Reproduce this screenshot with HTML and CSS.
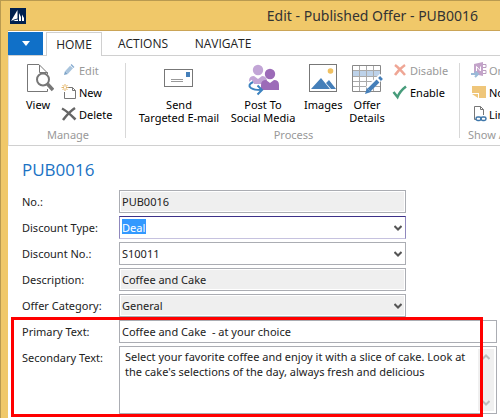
FILE: index.html
```html
<!DOCTYPE html>
<html lang="en">
<head>
<meta charset="utf-8">
<title>Edit - Published Offer - PUB0016</title>
<link rel="stylesheet" href="styles.css">
</head>
<body>
<div class="window">
  <header class="titlebar">
    <svg class="logo" viewBox="0 0 16 16" aria-hidden="true"><rect width="16" height="16" fill="#00204f"/><path d="M1 13 7.500 2V10.500Q4 11 1 13ZM9 13V5L11 9V13ZM12 13V6.500L14 10V13ZM3 13Q5 11.500 8 11.500V13Z" fill="#fff"/></svg>
    <span class="window-title">Edit - Published Offer - PUB0016</span>
  </header>
  <div class="client">
    <nav class="tabs">
      <button class="app-menu" type="button" aria-label="Application menu"><svg class="menu-arrow" viewBox="0 0 8 5"><path d="M0 0h8L4 5Z" fill="#fff"/></svg></button>
      <button class="tab active" type="button">HOME</button>
      <button class="tab" type="button">ACTIONS</button>
      <button class="tab wide" type="button">NAVIGATE</button>
    </nav>
    <section class="ribbon">
      <div class="group manage">
        <div class="commands">
          <button class="big view" type="button">
            <svg class="icon" viewBox="0 0 32 32"><path d="M17 .5H5.500V27.500H25.500V25M17 .5 25.500 9M17.500 1V8.500H25.500V10" fill="none" stroke="#777"/><circle cx="21" cy="15.500" r="6" fill="#fff" stroke="#777" stroke-width="2"/><path d="m25.500 20 5.500 6" stroke="#777" stroke-width="3.500"/></svg>
            View
          </button>
          <div class="stack">
            <button class="small disabled" type="button" disabled><svg class="icon" viewBox="0 0 16 16"><path d="m3 13 1-4 3 3Z" fill="#7da4c8"/><path d="m5.500 10.500 5-5.500" stroke="#a9c4dd" stroke-width="4"/><path d="m11 4.500 1-1" stroke="#86abd0" stroke-width="4"/></svg>Edit</button>
            <button class="small" type="button"><svg class="icon" viewBox="0 0 16 16"><path d="M7 3.500h4.500l3 3v8h-11V8M11.500 3.500v3h3" fill="none" stroke="#777"/><path d="M4 0v7M.5 3.500h7M1.500 1l5 5M6.500 1l-5 5" stroke="#e5b566"/><rect x="3" y="2.500" width="2" height="2" fill="#fff"/></svg>New</button>
            <button class="small" type="button"><svg class="icon" viewBox="0 0 16 16"><path d="M1 2.500Q6 5 14.500 13.500M14 2Q8 6 2 14" fill="none" stroke="#666" stroke-width="2.500"/></svg>Delete</button>
          </div>
        </div>
        <div class="group-label">Manage</div>
      </div>
      <div class="group process">
        <div class="commands">
          <button class="big send" type="button">
            <svg class="icon" viewBox="0 0 32 32"><rect x="1.500" y="5.500" width="28" height="17" fill="#fff" stroke="#777"/><rect x="23" y="8" width="4" height="5" fill="#457fba"/><path d="M8 15.500h12M8 17.500h12" stroke="#999"/></svg>
            Send<br>Targeted E-mail
          </button>
          <button class="big post" type="button">
            <svg class="icon" viewBox="0 0 32 32"><circle cx="11" cy="6" r="5.200" fill="#c2a5d6"/><path d="M2 20v-3q0-5 5-5l4 3 4-3q4 0 5 4v4Z" fill="#c2a5d6"/><circle cx="23" cy="10" r="5.200" fill="#9c6bb8"/><path d="M14 26v-5q0-5 5-5l4 3 4-3q5 0 5 5v5Z" fill="#9c6bb8"/><path d="M6 18q-5 3-2 6 2 3 10 2" fill="none" stroke="#fff" stroke-width="5"/><path d="M6 18q-6 3-2 6 3 2 10 2M10.500 21.500l4.500 4.500-4.500 4.500" fill="none" stroke="#3c82bf" stroke-width="2"/></svg>
            Post To<br>Social Media
          </button>
          <button class="big images" type="button">
            <svg class="icon" viewBox="0 0 32 32"><rect x="2.500" y=".5" width="27" height="27" fill="#fff" stroke="#777"/><circle cx="23.500" cy="7" r="2.800" fill="#f0c060"/><path d="m4 25 10-11 9 11ZM19 19l3-3 7 9h-5Z" fill="#457fb9"/></svg>
            Images
          </button>
          <button class="big offer" type="button">
            <svg class="icon" viewBox="0 0 32 32"><path d="M1.500 1.500h28v26h-28Z" fill="#fff"/><path d="M2 7h27v5H2Z" fill="#bdd2e9"/><path d="M1.500 6.500h28M1.500 12.500h28M1.500 17.500h28M1.500 22.500h28M8.500 1.500v26M15.500 1.500v26M22.500 1.500v26" stroke="#aaa" fill="none"/><path d="M1.500 1.500h28v26h-28Z" stroke="#888" fill="none"/><path d="m17 25 14-13" stroke="#fff" stroke-width="6"/><path d="m14 30 2-6 4 4Z" fill="#457fb9"/><path d="m18 26 9-9M28.500 15.500l2-2" stroke="#457fb9" stroke-width="4"/></svg>
            Offer<br>Details
          </button>
          <div class="stack">
            <button class="small disabled" type="button" disabled><svg class="icon" viewBox="0 0 16 16"><path d="M3 3q4 3 10 10M13 3Q7 7 3 13" fill="none" stroke="#efa695" stroke-width="2.500"/></svg>Disable</button>
            <button class="small" type="button"><svg class="icon" viewBox="0 0 16 16"><path d="m1.500 8 4 5Q8 7 14 2.500" fill="none" stroke="#479c7b" stroke-width="2.500"/></svg>Enable</button>
          </div>
        </div>
        <div class="group-label">Process</div>
      </div>
      <div class="group attached">
        <div class="commands">
          <div class="stack">
            <button class="small disabled" type="button" disabled><svg class="icon" viewBox="0 0 16 16"><path d="M3 2 12 0v14l-9-2Z" fill="#c3a3c9"/><path d="M5.500 9V4.500l4 4.500V4.500" stroke="#fff" fill="none"/><path d="M12 2.500h3v3h-3M12 8.500h3v3h-3" stroke="#b99dc0" fill="none"/><path d="M0 12h6M4 9.500 7 12l-3 3" stroke="#9bbad8" stroke-width="2" fill="none"/></svg>OneNote</button>
            <button class="small" type="button"><svg class="icon" viewBox="0 0 16 16"><path d="M1 2h14v12H8V9H1ZM1 10h6v4Z" fill="#efc67a"/></svg>Notes</button>
            <button class="small" type="button"><svg class="icon" viewBox="0 0 16 16"><path d="M5 13.500H3.500V.5h6l3 3V9M9.500.5v3h3" fill="none" stroke="#777"/><g fill="none" stroke="#3f77aa" stroke-width="1.500"><rect x="5" y="11" width="5" height="3.500" rx="1.700"/><rect x="10" y="11" width="5" height="3.500" rx="1.700"/></g></svg>Links</button>
          </div>
        </div>
        <div class="group-label">Show Attached</div>
      </div>
    </section>
    <main class="page">
      <h1>PUB0016</h1>
      <form class="form">
        <div class="row"><label for="no">No.:</label><input id="no" class="field readonly" value="PUB0016" readonly></div>
        <div class="row"><label for="type">Discount Type:</label><div class="combo"><select id="type" class="field focused"><option>Deal</option></select><svg class="chevron" viewBox="0 0 8 6"><path d="m.5 1 3.500 3.500L7.500 1" /></svg></div></div>
        <div class="row"><label for="dno">Discount No.:</label><div class="combo"><select id="dno" class="field"><option>S10011</option></select><svg class="chevron" viewBox="0 0 8 6"><path d="m.5 1 3.500 3.500L7.500 1" /></svg></div></div>
        <div class="row"><label for="desc">Description:</label><input id="desc" class="field readonly" value="Coffee and Cake" readonly></div>
        <div class="row"><label for="cat">Offer Category:</label><div class="combo"><select id="cat" class="field readonly"><option>General</option></select><svg class="chevron" viewBox="0 0 8 6"><path d="m.5 1 3.500 3.500L7.500 1" /></svg></div></div>
        <div class="highlight">
          <div class="row long"><label for="primary">Primary Text:</label><input id="primary" class="field" value="Coffee and Cake  - at your choice"></div>
          <div class="row long"><label for="secondary">Secondary Text:</label>
            <div class="memo">
              <textarea id="secondary">Select your favorite coffee and enjoy it with a slice of cake. Look at the cake's selections of the day, always fresh and delicious</textarea>
              <div class="scrollbar"><svg viewBox="0 0 8 6"><path d="M.5 5 4 1.500 7.500 5"/></svg><svg viewBox="0 0 8 6"><path d="m.5 1 3.500 3.500L7.500 1"/></svg></div>
            </div>
          </div>
        </div>
      </form>
    </main>
  </div>
</div>
</body>
</html>
```
FILE: styles.css
```css
* { box-sizing: border-box; }

body {
  margin: 0;
  overflow: hidden;
  font: 11px/13px "Noto Sans", "Open Sans", sans-serif;
  color: #222;
}

button, input, select, textarea {
  margin: 0;
  padding: 0;
  border: 0;
  background: none;
  font: inherit;
  color: inherit;
}

.window {
  display: flex;
  flex-direction: column;
  min-height: 100vh;
  padding-left: 7px;
  border-top: 1px solid #b99a50;
  border-left: 1px solid #b99a50;
  background: #f0c869;
}

.titlebar {
  display: flex;
  align-items: center;
  justify-content: space-between;
  height: 30px;
  padding: 0 22px 0 2px;
  border-bottom: 1px solid #cba557;
}

.logo { width: 16px; height: 16px; }

.window-title { font-size: 14px; line-height: 20px; color: #333; }

.client { flex: 1; background: #fff; }

.tabs {
  display: flex;
  height: 25px;
  padding-top: 1px;
  border-bottom: 1px solid #d0d0d0;
}

.app-menu {
  width: 35px;
  margin-right: 3px;
  background: #1070c8;
}

.menu-arrow { display: block; width: 8px; height: 5px; margin: 0 auto; }

.tab { width: 82px; font: 12px/16px "Open Sans", "Noto Sans", sans-serif; color: #222; }

.tab.wide { width: 78px; }

.tab.active {
  width: 56px;
  margin-bottom: -1px;
  border: 1px solid #d0d0d0;
  border-bottom: 0;
  background: #fff;
}

.ribbon {
  display: flex;
  height: 90px;
  padding: 7px 0;
  overflow: hidden;
  border-bottom: 1px solid #d0d0d0;
  border-left: 1px solid #e4e4e4;
}

.group {
  display: flex;
  flex: none;
  flex-direction: column;
  justify-content: space-between;
  border-right: 1px solid #d8d8d8;
}

.manage { width: 117px; padding-left: 10px; }
.process { width: 334px; padding-left: 10px; }
.attached { width: 110px; padding-left: 8px; }

.attached .commands { padding-left: 3px; }

.commands { display: flex; gap: 4px; }

.group-label {
  margin-bottom: -4px;
  padding-right: 8px;
  line-height: 14px;
  color: #999;
  text-align: center;
}

.attached .group-label { padding: 0; text-align: left; }

.big {
  display: block;
  color: #000;
  text-align: center;
  white-space: nowrap;
}

.big .icon { display: block; width: 32px; height: 32px; margin: 1px auto 2px; }

.view { width: 38px; align-self: flex-start; }
.send { width: 86px; }
.post { width: 74px; }
.images { width: 38px; align-self: flex-start; }
.offer { width: 42px; }

.stack { display: flex; flex-direction: column; gap: 6px; margin-top: -1px; }

.small {
  display: flex;
  align-items: center;
  gap: 2px;
  height: 16px;
  color: #000;
}

.small .icon { width: 16px; height: 16px; }

.small.disabled { color: #999; }

.page { padding: 12px 3px 0 14px; }

h1 {
  margin: 0 0 8px;
  font: 17px/24px "Open Sans", "Noto Sans", sans-serif;
  color: #1a72c4;
}

.form { display: flex; flex-direction: column; gap: 3px; }

.row {
  display: grid;
  grid-template-columns: 97px minmax(0, 287px);
}

.row.long { grid-template-columns: 97px minmax(0, 1fr); }

.row label { line-height: 23px; }

.field {
  width: 100%;
  height: 23px;
  padding: 0 2px;
  border: 1px solid #abadb3;
  background: #fff;
}

select.field { appearance: none; display: block; }

.field.readonly { background: #efefef; box-shadow: inset 0 0 0 1px #fff; }

.field.focused {
  border-color: #3d3189 #8f88bd #c6c2df;
  background: linear-gradient(#39f, #39f) no-repeat 2px 2px / 24px 15px #fff;
  color: #fff;
}

.combo { position: relative; }

.chevron {
  position: absolute;
  top: 9px;
  right: 4px;
  width: 8px;
  height: 6px;
  pointer-events: none;
}

.chevron path { fill: none; stroke: #555; stroke-width: 2; }

.highlight {
  position: relative;
  display: flex;
  flex-direction: column;
  gap: 3px;
}

.highlight::after {
  content: "";
  position: absolute;
  inset: -3px 14px -3px -11px;
  border: 3px solid #f00;
  pointer-events: none;
}

.memo {
  display: flex;
  height: 68px;
  padding: 2px;
  border: 1px solid #abadb3;
}

textarea {
  flex: 1;
  min-width: 0;
  padding: 0 0 0 3px;
  resize: none;
  overflow: hidden;
  line-height: 15px;
}

.scrollbar {
  display: flex;
  flex-direction: column;
  justify-content: space-between;
  align-items: center;
  width: 16px;
  padding: 5px 0;
  background: #f0f0f0;
}

.scrollbar svg { width: 8px; height: 6px; }

.scrollbar path { fill: none; stroke: #bbb; stroke-width: 2; }
```
